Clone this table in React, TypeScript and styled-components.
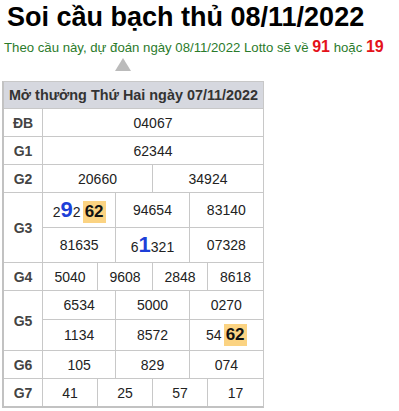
import styled, { createGlobalStyle } from "styled-components";

const GlobalStyle = createGlobalStyle`
  body {
    margin: 0;
    background: #fff;
    font-family: "Liberation Sans", Arial, sans-serif;
    color: #222;
  }
`;

const Page = styled.main`
  width: 399px;
  padding: 0 2px;
  box-sizing: border-box;
`;

const Title = styled.h1`
  margin: 0 0 0 5px;
  font-size: 27px;
  line-height: 34px;
  font-weight: 700;
  color: #000;
`;

const Subtitle = styled.div`
  margin: 2px 0 0 2px;
  height: 22px;
  font-size: 13.2px;
  line-height: 22px;
  color: #2b7b2b;
`;

const Lotto = styled.b`
  font-size: 16px;
  color: #e4121b;
`;

const Pointer = styled.div`
  width: 0;
  height: 0;
  margin: 0 0 0 113px;
  border-left: 8.5px solid transparent;
  border-right: 8.5px solid transparent;
  border-bottom: 13px solid #bbbbbb;
`;

const Table = styled.div`
  margin-top: 10px;
  width: 262px;
  box-sizing: border-box;
  border-left: 2px solid #c2c2c2;
  border-bottom: 2px solid #c2c2c2;
  border-right: 1px solid #c8c8c8;
  border-top: 1px solid #c8c8c8;
  display: flex;
  flex-direction: column;
`;

const Head = styled.div`
  height: 26px;
  background: #d6d8df;
  border-bottom: 1px solid #c8c8c8;
  display: flex;
  align-items: center;
  justify-content: center;
  font-size: 14.4px;
  font-weight: 700;
  color: #333;
`;

const Row = styled.div`
  display: grid;
  grid-template-columns: 39px 1fr;
  border-bottom: 1px solid #c8c8c8;

  &:last-child {
    border-bottom: none;
  }
`;

const Label = styled.div`
  display: flex;
  align-items: center;
  justify-content: center;
  border-right: 1px solid #c8c8c8;
  font-size: 14px;
  font-weight: 700;
  color: #444;
`;

const Prizes = styled.div`
  display: flex;
  flex-direction: column;
`;

const Line = styled.div<{ $cols: number; $h: number }>`
  display: grid;
  grid-template-columns: repeat(${(p) => p.$cols}, 1fr);
  height: ${(p) => p.$h}px;
  border-bottom: 1px solid #c8c8c8;

  &:last-child {
    border-bottom: none;
  }
`;

const Cell = styled.div`
  display: flex;
  align-items: center;
  justify-content: center;
  border-right: 1px solid #c8c8c8;
  font-size: 14px;
  color: #222;

  &:last-child {
    border-right: none;
  }
`;

const Hit = styled.span`
  font-size: 22px;
  font-weight: 700;
  color: #1d3fd8;
`;

const Pair = styled.span`
  margin-left: 2px;
  padding: 1px 2px;
  background: #fbd382;
  font-size: 17px;
  font-weight: 700;
  color: #111;
`;

const Digits = styled.span`
  display: inline-flex;
  align-items: baseline;
`;

type Prize = { label: string; lines: { h: number; cells: React.ReactNode[] }[] };

const prizes: Prize[] = [
  { label: "ĐB", lines: [{ h: 27, cells: ["04067"] }] },
  { label: "G1", lines: [{ h: 27, cells: ["62344"] }] },
  { label: "G2", lines: [{ h: 27, cells: ["20660", "34924"] }] },
  {
    label: "G3",
    lines: [
      {
        h: 34,
        cells: [
          <Digits>
            2<Hit>9</Hit>2<Pair>62</Pair>
          </Digits>,
          "94654",
          "83140",
        ],
      },
      {
        h: 34,
        cells: [
          "81635",
          <Digits>
            6<Hit>1</Hit>321
          </Digits>,
          "07328",
        ],
      },
    ],
  },
  { label: "G4", lines: [{ h: 27, cells: ["5040", "9608", "2848", "8618"] }] },
  {
    label: "G5",
    lines: [
      { h: 28, cells: ["6534", "5000", "0270"] },
      {
        h: 30,
        cells: [
          "1134",
          "8572",
          <Digits>
            54<Pair>62</Pair>
          </Digits>,
        ],
      },
    ],
  },
  { label: "G6", lines: [{ h: 27, cells: ["105", "829", "074"] }] },
  { label: "G7", lines: [{ h: 27, cells: ["41", "25", "57", "17"] }] },
];

export default function App() {
  return (
    <Page>
      <GlobalStyle />
      <Title>Soi cầu bạch thủ 08/11/2022</Title>
      <Subtitle>
        Theo cầu này, dự đoán ngày 08/11/2022 Lotto sẽ về <Lotto>91</Lotto> hoặc{" "}
        <Lotto>19</Lotto>
      </Subtitle>
      <Pointer />
      <Table>
        <Head>Mở thưởng Thứ Hai ngày 07/11/2022</Head>
        {prizes.map((p) => (
          <Row key={p.label}>
            <Label>{p.label}</Label>
            <Prizes>
              {p.lines.map((l, i) => (
                <Line key={i} $cols={l.cells.length} $h={l.h}>
                  {l.cells.map((c, j) => (
                    <Cell key={j}>{c}</Cell>
                  ))}
                </Line>
              ))}
            </Prizes>
          </Row>
        ))}
      </Table>
    </Page>
  );
}
